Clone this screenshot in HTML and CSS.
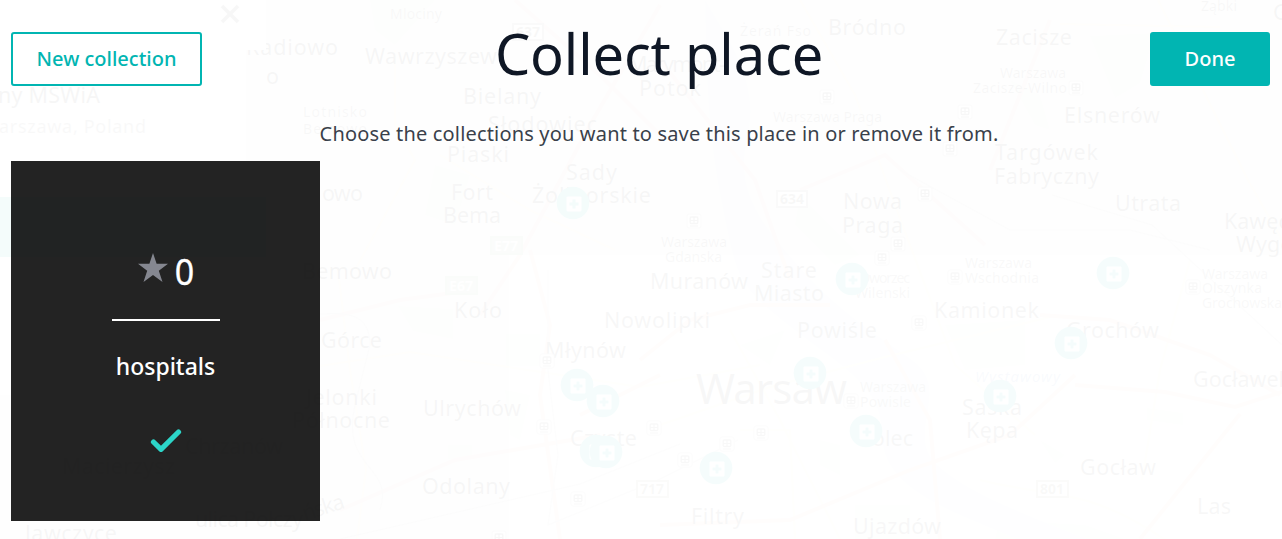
FILE: index.html
```html
<!DOCTYPE html>
<html lang="en">
<head>
<meta charset="utf-8">
<title>Collect place</title>
<link rel="stylesheet" href="styles.css">
</head>
<body>
<svg class="map" viewBox="0 0 1282 539" aria-hidden="true">
  <defs>
    <g id="pin"><circle r="16.3" fill="#00b5b2"/><rect x="-6.5" y="-6.5" width="15" height="15" rx="1" fill="#fff"/><path d="M1-3.5v9M-3.5 1h9" stroke="#00b5b2" stroke-width="3"/></g>
    <g id="rail"><rect x="-7" y="-7" width="14" height="14" rx="2" fill="#fff" stroke="#aaa"/><rect x="-3.8" y="-4" width="7.6" height="6.5" rx="1" fill="none" stroke="#555" stroke-width="1.3"/><path d="M0-4v6M-4-.5h8M-4 5h8" stroke="#555" stroke-width="1.2"/></g>
  </defs>
  <rect width="1282" height="539" fill="#f8f8f6"/>
  <g class="parks">
    <path d="M370 0h65l-40 45-20-15zM435 165l35 10-15 50-30-10zM398 306l55 3v30l-40-8zM506 334h34v32h-34zM448 445h24v14h-24zM505 390l25 5-10 45-10-5zM740 345l45-15-15 35zM800 195l60 60-25 10-40-40zM945 325l80-5v45l-60 5zM1090 36l65-3-15 50-25 15zM1010 80l30 15 10 35-15-5zM1147 408l36 5v12l-36-5zM1040 440l25 15-10 8zM820 440l20 5v30l-20-10zM1000 520l85 5 40 14h-130zM855 505h55v34h-55z"/>
  </g>
  <path class="water" d="M705 0c30 50 55 85 42 140s20 90 55 130 75 65 110 90 5 60 15 90 90 62 160 89h-70c-70-30-135-50-135-105 0-50-45-70-95-110s-50-45-65-120-15-125-17-204z"/>
  <g class="minor">
    <path d="M320 366l90-14 230 35 120-22M660 425l110-38 115-30 165-40M338 270l12 100 16 100-9 69M395 50v75l20 35-60 110M730 330l50 90 60 119M800 0l55 95 40 110 60 160 80 70M1190 260l-30 110-18 110M980 480c80 20 110 5 200 70M1158 0l90 180 34 60M440 155l90 55 85 40M1060 24l160 3M740 430l50 0 5 109"/>
  </g>
  <g class="major">
    <path d="M320 320l80-20 60-8M340 510l115-50 145-25M515 0l90 80 60 60M660 5l-70 120-70 130-40 60M530 250l20 75-10 70 20 144M640 360l50-40 60-15 80 0M580 415l80-40M660 525l130-5 120-50 100-35 65-60M1075 385l90 7 70 15 47-15M1140 539l100-125M1040 315l70 5 100 35 70 40M660 60l95 120 35 100M885 340l45 80 10 119M1050 20l-60 150M800 190l85-35 100 90"/>
  </g>
  <path class="track" d="M310 315c40-5 60 0 60 30l-15 60c-15 65 40 60 25 105M548 270v100l10 85-10 70 110-45 80-40M900 170l110 60 120 0 80 20M1282 345l-130-120-100-30M340 539l240-55 100-40"/>
  <g class="town">
    <text x="246" y="55" textLength="92">Radiowo</text><text x="266" y="84">o</text>
    <text x="365" y="64" textLength="132">Wawrzyszew</text><text x="463" y="104" textLength="78">Bielany</text>
    <text x="488" y="132" textLength="109">Słodowiec</text><text x="447" y="162" textLength="62">Piaski</text>
    <text x="566" y="180" textLength="51">Sady</text><text x="532" y="203" textLength="119">Żoliborskie</text>
    <text x="451" y="200" textLength="42">Fort</text><text x="443" y="223" textLength="58">Bema</text>
    <text x="628" y="72" textLength="98">Marymont-</text><text x="639" y="96" textLength="62">Potok</text>
    <text x="828" y="35" textLength="78">Bródno</text><text x="996" y="45" textLength="76">Zacisze</text>
    <text x="1064" y="123" textLength="96">Elsnerów</text><text x="995" y="160" textLength="103">Targówek</text>
    <text x="994" y="184" textLength="105">Fabryczny</text><text x="1115" y="211" textLength="66">Utrata</text>
    <text x="1224" y="229">Kawęczyn</text><text x="1236" y="252">Wygoda</text>
    <text x="843" y="209" textLength="59">Nowa</text><text x="842" y="233" textLength="61">Praga</text>
    <text x="322" y="201" textLength="41">owo</text><text x="302" y="279" textLength="90">Bemowo</text>
    <text x="321" y="348" textLength="61">Górce</text><text x="454" y="318" textLength="48">Koło</text>
    <text x="604" y="328" textLength="106">Nowolipki</text><text x="545" y="358" textLength="81">Młynów</text>
    <text x="650" y="289" textLength="98">Muranów</text><text x="761" y="278" textLength="56">Stare</text>
    <text x="754" y="301" textLength="70">Miasto</text><text x="797" y="338" textLength="80">Powiśle</text>
    <text x="934" y="318" textLength="105">Kamionek</text><text x="1066" y="338" textLength="93">Grochów</text>
    <text x="306" y="405" textLength="71">Jelonki</text><text x="292" y="428" textLength="98">Północne</text>
    <text x="423" y="416" textLength="98">Ulrychów</text><text x="570" y="446" textLength="67">Czyste</text>
    <text x="422" y="494" textLength="88">Odolany</text><text x="691" y="524" textLength="53">Filtry</text>
    <text x="853" y="534" textLength="88">Ujazdów</text><text x="860" y="446" textLength="53">Solec</text>
    <text x="962" y="415" textLength="60">Saska</text><text x="966" y="438" textLength="52">Kępa</text>
    <text x="1193" y="387">Gocławek</text><text x="1080" y="475" textLength="76">Gocław</text>
    <text x="1197" y="514" textLength="34">Las</text><text x="1273" y="20">G</text>
    <text x="185" y="454" textLength="98">Chrzanów</text><text x="62" y="474" textLength="113">Macierzysz</text>
    <text x="25" y="541" textLength="92">Jawczyce</text>
    <text x="195" y="527" textLength="108">ulica Połczy</text><text x="305" y="521" textLength="43" transform="rotate(-18 305 521)">ńska</text>
    <text class="city" x="696" y="404" textLength="151">Warsaw</text>
  </g>
  <g class="stop">
    <text x="390" y="19" textLength="52">Mlociny</text><text x="303" y="117" textLength="64">Lotnisko</text><text x="303" y="134" textLength="64">Bemowo</text>
    <text x="740" y="36" textLength="71">Żerań Fso</text><text x="773" y="122" textLength="109">Warszawa Praga</text>
    <text x="1000" y="78" textLength="66">Warszawa</text><text x="973" y="93" textLength="94">Zacisze-Wilno</text>
    <text x="1201" y="11" textLength="36">Ząbki</text><text x="661" y="247" textLength="66">Warszawa</text><text x="665" y="262" textLength="57">Gdanska</text>
    <text x="965" y="268" textLength="67">Warszawa</text><text x="965" y="283" textLength="74">Wschodnia</text>
    <text x="860" y="283" textLength="50">Dworzec</text><text x="855" y="298" textLength="55">Wilenski</text>
    <text x="1202" y="279" textLength="66">Warszawa</text><text x="1202" y="293" textLength="60">Olszynka</text><text x="1202" y="308" textLength="80">Grochowska</text>
    <text x="860" y="392" textLength="66">Warszawa</text><text x="860" y="407" textLength="51">Powisle</text>
    <text class="canal" x="975" y="382" textLength="85">Wystawowy</text>
  </g>
  <use href="#rail" x="827" y="97"/><use href="#rail" x="1076" y="88"/><use href="#rail" x="965" y="112"/><use href="#rail" x="950" y="149"/><use href="#rail" x="925" y="194"/><use href="#rail" x="898" y="244"/><use href="#rail" x="882" y="258"/><use href="#rail" x="694" y="221"/><use href="#rail" x="955" y="277"/><use href="#rail" x="919" y="323"/><use href="#rail" x="1193" y="287"/><use href="#rail" x="547" y="361"/><use href="#rail" x="544" y="427"/><use href="#rail" x="654" y="428"/><use href="#rail" x="578" y="499"/><use href="#rail" x="685" y="460"/><use href="#rail" x="727" y="444"/><use href="#rail" x="761" y="433"/><use href="#rail" x="851" y="401"/><use href="#rail" x="499" y="538"/>
  <g class="shield">
    <rect x="513" y="24" width="30" height="16"/><text x="528" y="37">637</text>
    <rect x="777" y="191" width="30" height="16"/><text x="792" y="204">634</text>
    <rect x="637" y="481" width="31" height="16"/><text x="652" y="494">717</text>
    <rect x="1037" y="481" width="31" height="16"/><text x="1052" y="494">801</text>
  </g>
  <g class="shield euro">
    <rect x="491" y="237" width="31" height="17"/><text x="506" y="251">E77</text>
    <rect x="446" y="277" width="31" height="17"/><text x="461" y="291">E67</text>
  </g>
  <use href="#pin" x="573" y="203"/><use href="#pin" x="852" y="279"/><use href="#pin" x="1113" y="273"/><use href="#pin" x="1071" y="343"/><use href="#pin" x="810" y="373"/><use href="#pin" x="1000" y="396"/><use href="#pin" x="866" y="431"/><use href="#pin" x="716" y="468"/><use href="#pin" x="577" y="385"/><use href="#pin" x="603" y="401"/><use href="#pin" x="596" y="451"/><use href="#pin" x="606" y="452"/>
  <path d="M0 0h266v50H246v345H0z" fill="#fff"/>
  <rect y="197" width="266" height="60" fill="#00b5b2"/>
  <path d="M222 6l16 16M238 6l-16 16" stroke="#555" stroke-width="3.4"/>
  <g class="town"><text x="-2" y="103" textLength="102">ny MSWiA</text><text class="address" x="-1" y="133" textLength="147">arszawa, Poland</text></g>
</svg>
<main class="modal">
  <header class="top">
    <button class="btn btn-outline">New collection</button>
    <div class="intro">
      <h1>Collect place</h1>
      <p>Choose the collections you want to save this place in or remove it from.</p>
    </div>
    <button class="btn btn-solid">Done</button>
  </header>
  <section class="collections">
    <article class="card">
      <div class="count">
        <svg width="30" height="30" viewBox="0 0 30 30"><path d="M15 0l3.6 10.8H30l-9.2 7L24.5 29 15 22 5.5 29l3.7-11.2L0 10.8h11.4z" fill="#858790"/></svg>
        <span>0</span>
      </div>
      <hr>
      <h2>hospitals</h2>
      <svg class="check" width="32" height="24" viewBox="0 0 32 24"><path d="M3.5 13l7.5 7.3L28.5 3" fill="none" stroke="#2bd5c8" stroke-width="5.2" stroke-linecap="round" stroke-linejoin="round"/></svg>
    </article>
  </section>
</main>
</body>
</html>
```
FILE: styles.css
```css
* { box-sizing: border-box; }
body {
  margin: 0;
  height: 539px;
  overflow: hidden;
  position: relative;
  background: #fff;
  font-family: "Noto Sans", "Open Sans", sans-serif;
}
.map { position: absolute; inset: 0; width: 1282px; height: 539px; }
.parks { fill: #e0f2dc; }
.water { fill: #d3e5fa; }
.minor { fill: none; stroke: #ffeebb; stroke-width: 2; }
.major { fill: none; stroke: #fbc0b4; stroke-width: 4; }
.track { fill: none; stroke: #ccc; stroke-width: 1.5; }
.town { fill: #3c3c3c; font-size: 21.5px; }
.town .city { font-size: 42px; }
.town .address { font-size: 18px; fill: #777; }
.stop { fill: #666; font-size: 14px; }
.stop .canal { fill: #668bc4; font-size: 15px; font-style: italic; }
.shield rect { fill: #fff; stroke: #998; stroke-width: 2; }
.shield text { fill: #665; font-size: 14px; font-weight: 700; text-anchor: middle; }
.euro rect { fill: #9ccaa5; stroke: #9c9; }
.euro text { fill: #fff; }

.modal {
  position: relative;
  height: 539px;
  padding: 32px 12px 18px 11px;
  background: rgba(255, 255, 255, .965);
  opacity: .994;
}
.top {
  display: grid;
  grid-template-columns: 309px 678px 1fr;
  align-items: start;
  height: 129px;
}
.btn {
  height: 54px;
  padding: 0 0 2px;
  border: 2px solid #00b5b2;
  border-radius: 3px;
  font: 500 20px "Noto Sans", "Open Sans", sans-serif;
}
.btn-outline { width: 191px; background: #fff; color: #00b5b2; }
.btn-solid { width: 120px; justify-self: end; background: #00b5b2; color: #fff; }
.intro { display: flex; flex-direction: column; align-items: center; white-space: nowrap; }
h1 {
  margin: -11px 0 0;
  color: #0e1624;
  font-size: 56px;
  font-weight: 400;
  line-height: 64px;
  letter-spacing: -.15px;
}
p { margin: 33px 0 0; color: #393f4a; font-size: 20px; line-height: 32px; letter-spacing: .17px; }
.card {
  display: flex;
  flex-direction: column;
  align-items: center;
  width: 309px;
  height: 360px;
  padding-top: 84px;
  background: #222;
  color: #fff;
}
.count { display: flex; align-items: center; gap: 7px; height: 52px; font-size: 37px; font-weight: 400; line-height: 52px; }
.count span { margin-right: -2px; -webkit-text-stroke: .3px #fff; transform: scaleX(.92); }
.count svg { margin: -6px -1px 0 1px; }
hr { width: 108px; height: 2px; margin: 22px 0 0; border: 0; background: #fff; }
h2 { margin: 28px 0 0; font-size: 23px; font-weight: 500; line-height: 34px; }
.check { margin-top: 46px; }
```
